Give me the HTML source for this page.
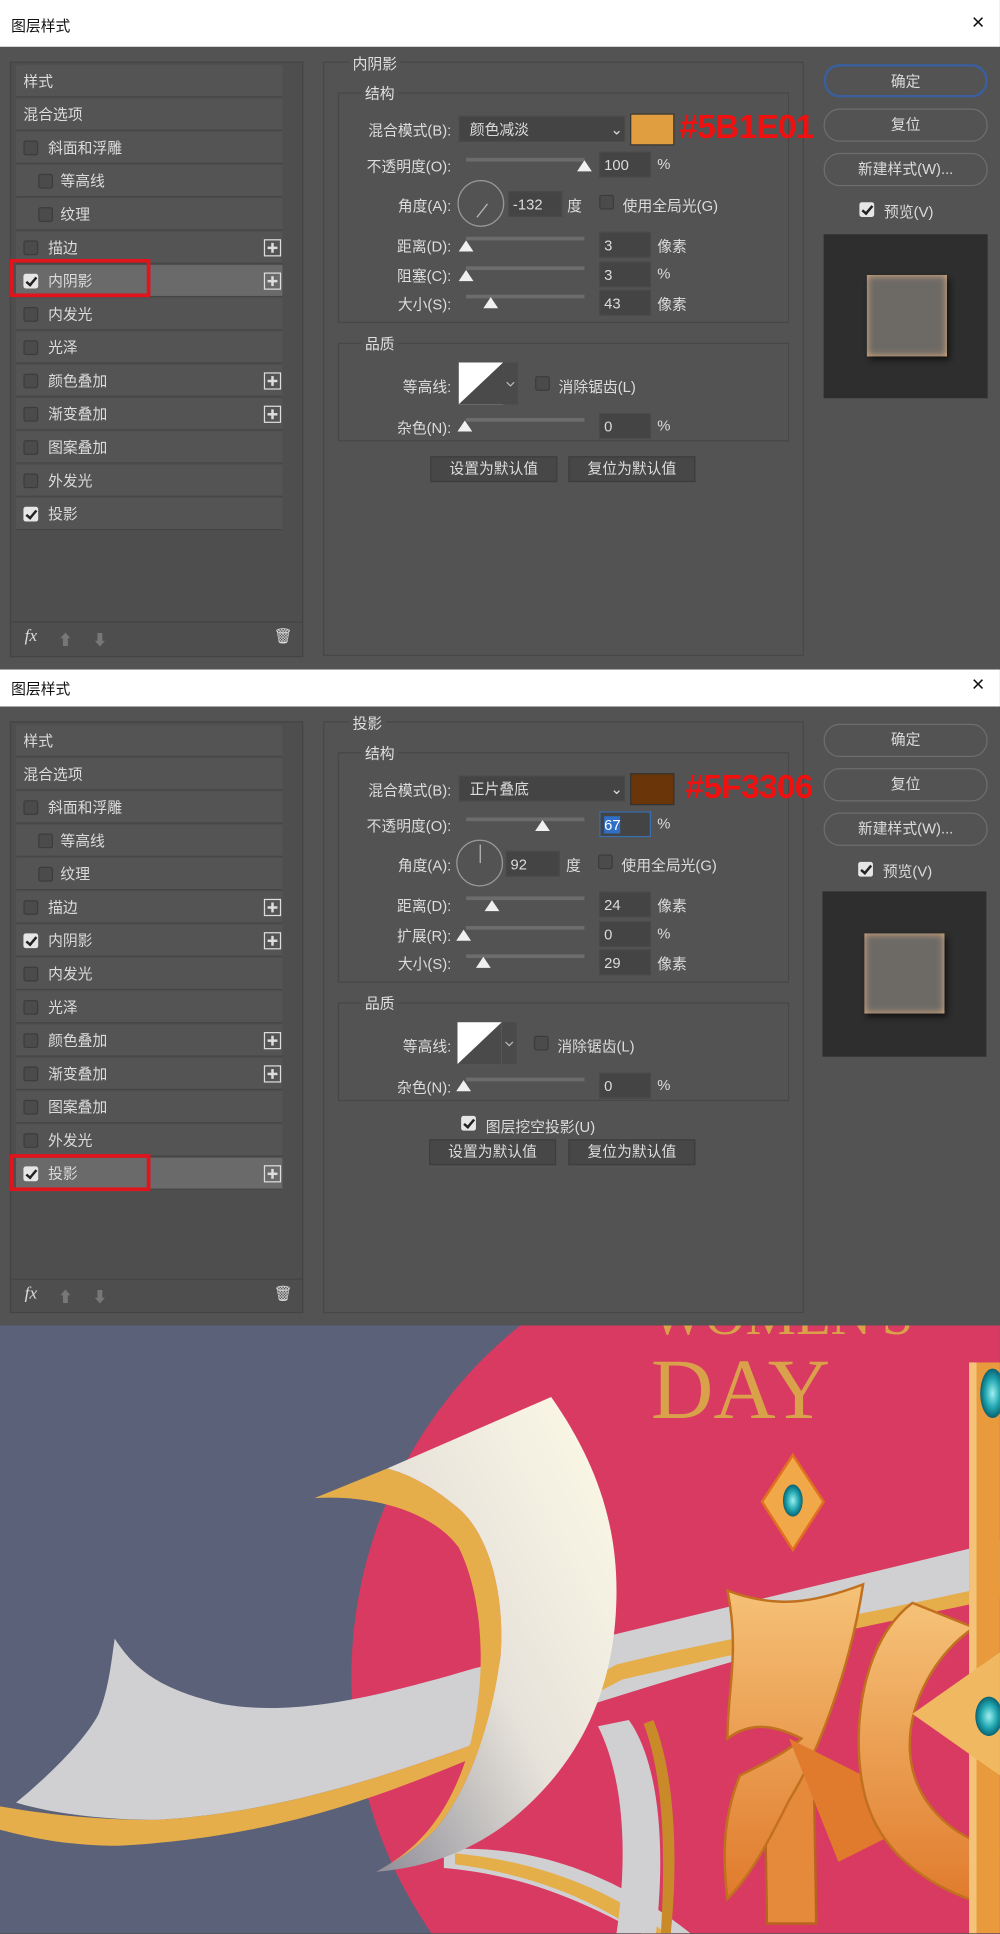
<!DOCTYPE html>
<html><head><meta charset="utf-8"><style>
*{box-sizing:border-box;margin:0;padding:0}
html,body{width:1000px;height:1934px;overflow:hidden;background:#535353}
#w{position:absolute;left:0;top:0;width:811px;height:1568px;overflow:hidden;transform:scale(1.2330);transform-origin:0 0;font-family:"Liberation Sans","Noto Sans CJK SC",sans-serif;font-size:12px;color:#dcdcdc}
.a{position:absolute}
.dlg{position:absolute;left:0;width:811px}
.tb{position:absolute;left:0;width:811px;background:#fff;color:#111;font-size:12px}
.body{position:absolute;left:0;top:38px;width:811px;background:#535353}
.lp{position:absolute;left:8px;top:50px;width:238px;height:483px;background:#4e4e4e;border:1px solid #444}
.row{position:absolute;left:4px;width:216px;height:26px;background:#545454;border-bottom:1px solid #454545;line-height:26px}
.row.sel{background:#6a6a6a}
.cb{position:absolute;width:12px;height:12px;border:1px solid #3c3c3c;background:#4b4b4b;border-radius:2px}
.cb.on{background:#e6e6e6;border-color:#e6e6e6}
.cb.on:after{content:"";position:absolute;left:3px;top:0px;width:3px;height:7px;border:solid #222;border-width:0 2px 2px 0;transform:rotate(40deg)}
.plus{position:absolute;left:201px;top:6px;width:14px;height:14px;border:1px solid #ddd}
.plus:before{content:"";position:absolute;left:2px;top:5px;width:8px;height:2px;background:#ddd}
.plus:after{content:"";position:absolute;left:5px;top:2px;width:2px;height:8px;background:#ddd}
.grp{position:absolute;border:1px solid #474747}
.lbl{position:absolute;background:#535353;padding:0 3px;color:#e0e0e0}
.rl{position:absolute;text-align:right;width:120px}
.inp{position:absolute;background:#444;border:1px solid #4a4a4a;height:21px;line-height:20px;padding-left:3px}
.tr{position:absolute;height:3px;background:#6c6c6c;width:96px}
.th{position:absolute;width:0;height:0;border-left:6px solid transparent;border-right:6px solid transparent;border-bottom:9px solid #f0f0f0}
.btn{position:absolute;border:1px solid #6e6e6e;border-radius:13px;text-align:center;line-height:25px;height:27px;width:133px;left:668px}
.sb{position:absolute;background:#474747;border:1px solid #3d3d3d;text-align:center;line-height:19px;height:21px;width:103px}
.red{position:absolute;color:#f01010;font-weight:bold;font-size:27px;font-family:"Liberation Sans",sans-serif;letter-spacing:-0.5px}
</style></head><body><div id="w">

<!-- DIALOG 1 -->
<div class="dlg" style="top:0;height:543px">
 <div class="tb" style="top:0;height:38px"><span class="a" style="left:9px;top:12px">图层样式</span><span class="a" style="left:788px;top:8px;font-size:18px">×</span></div>
 <div class="body" style="height:505px">
  <div class="lp" style="top:12px">
   <div class="row" style="top:2px;padding-left:6px">样式</div>
   <div class="row" style="top:29px;padding-left:6px">混合选项</div>
   <div class="row" style="top:56px"><i class="cb" style="left:6px;top:7px"></i><span class="a" style="left:26px">斜面和浮雕</span></div>
   <div class="row" style="top:83px"><i class="cb" style="left:18px;top:7px"></i><span class="a" style="left:36px">等高线</span></div>
   <div class="row" style="top:110px"><i class="cb" style="left:18px;top:7px"></i><span class="a" style="left:36px">纹理</span></div>
   <div class="row" style="top:137px"><i class="cb" style="left:6px;top:7px"></i><span class="a" style="left:26px">描边</span><i class="plus"></i></div>
   <div class="row sel" style="top:164px"><i class="cb on" style="left:6px;top:7px"></i><span class="a" style="left:26px">内阴影</span><i class="plus"></i></div>
   <div class="row" style="top:191px"><i class="cb" style="left:6px;top:7px"></i><span class="a" style="left:26px">内发光</span></div>
   <div class="row" style="top:218px"><i class="cb" style="left:6px;top:7px"></i><span class="a" style="left:26px">光泽</span></div>
   <div class="row" style="top:245px"><i class="cb" style="left:6px;top:7px"></i><span class="a" style="left:26px">颜色叠加</span><i class="plus"></i></div>
   <div class="row" style="top:272px"><i class="cb" style="left:6px;top:7px"></i><span class="a" style="left:26px">渐变叠加</span><i class="plus"></i></div>
   <div class="row" style="top:299px"><i class="cb" style="left:6px;top:7px"></i><span class="a" style="left:26px">图案叠加</span></div>
   <div class="row" style="top:326px"><i class="cb" style="left:6px;top:7px"></i><span class="a" style="left:26px">外发光</span></div>
   <div class="row" style="top:353px"><i class="cb on" style="left:6px;top:7px"></i><span class="a" style="left:26px">投影</span></div>
   <div class="a" style="left:0;top:453px;width:236px;height:1px;background:#444"></div>
   <span class="a" style="left:11px;top:458px;font-style:italic;font-size:14px;font-family:'Liberation Serif',serif">fx</span>
   <span class="a" style="left:38px;top:459px;color:#777">⬆</span><span class="a" style="left:66px;top:459px;color:#777">⬇</span>
   <span class="a" style="left:213px;top:458px">🗑</span>
  </div>
  <div class="a" style="left:8px;top:172px;width:114px;height:31px;border:3px solid #e0141c"></div>
  <div class="grp" style="left:262px;top:12px;width:390px;height:482px"></div>
  <span class="lbl" style="left:283px;top:5px">内阴影</span>
  <div class="grp" style="left:274px;top:37px;width:366px;height:187px"></div>
  <span class="lbl" style="left:293px;top:29px">结构</span>
  <span class="rl" style="left:246px;top:59px">混合模式(B):</span>
  <div class="inp" style="left:372px;top:56px;width:135px;padding-left:8px">颜色减淡<span class="a" style="left:122px;top:0">⌄</span></div>
  <div class="a" style="left:511px;top:54px;width:36px;height:26px;background:#e09e40;border:1px solid #333"></div>
  <span class="red" style="left:551px;top:50px">#5B1E01</span>
  <span class="rl" style="left:246px;top:88px">不透明度(O):</span>
  <div class="tr" style="left:378px;top:90px"></div><i class="th" style="left:468px;top:92px"></i>
  <div class="inp" style="left:486px;top:85px;width:42px">100</div><span class="a" style="left:533px;top:88px">%</span>
  <span class="rl" style="left:246px;top:120px">角度(A):</span>
  <div class="a" style="left:371px;top:108px;width:38px;height:38px;border:1px solid #999;border-radius:50%"></div>
  <div class="a" style="left:381px;top:127px;width:14px;height:1px;background:#bbb;transform:rotate(-52deg);transform-origin:100% 0"></div>
  <div class="inp" style="left:412px;top:117px;width:44px">-132</div><span class="a" style="left:460px;top:120px">度</span>
  <i class="cb" style="left:486px;top:120px"></i><span class="a" style="left:505px;top:120px">使用全局光(G)</span>
  <span class="rl" style="left:246px;top:153px">距离(D):</span>
  <div class="tr" style="left:378px;top:154px"></div><i class="th" style="left:372px;top:157px"></i>
  <div class="inp" style="left:486px;top:150px;width:42px">3</div><span class="a" style="left:533px;top:153px">像素</span>
  <span class="rl" style="left:246px;top:177px">阻塞(C):</span>
  <div class="tr" style="left:378px;top:178px"></div><i class="th" style="left:372px;top:181px"></i>
  <div class="inp" style="left:486px;top:174px;width:42px">3</div><span class="a" style="left:533px;top:177px">%</span>
  <span class="rl" style="left:246px;top:200px">大小(S):</span>
  <div class="tr" style="left:378px;top:201px"></div><i class="th" style="left:392px;top:203px"></i>
  <div class="inp" style="left:486px;top:197px;width:42px">43</div><span class="a" style="left:533px;top:200px">像素</span>
  <div class="grp" style="left:274px;top:240px;width:366px;height:80px"></div>
  <span class="lbl" style="left:293px;top:232px">品质</span>
  <span class="rl" style="left:246px;top:267px">等高线:</span>
  <svg class="a" style="left:372px;top:256px" width="50" height="34"><rect x="0" y="0" width="36" height="34" fill="#fff"/><path d="M0 34L36 0V34Z" fill="#4a4a4a"/><rect x="36" y="0" width="12" height="34" fill="#4a4a4a"/><path d="M39 16l3 3 3-3" stroke="#bbb" fill="none"/></svg>
  <i class="cb" style="left:434px;top:267px"></i><span class="a" style="left:453px;top:267px">消除锯齿(L)</span>
  <span class="rl" style="left:246px;top:300px">杂色(N):</span>
  <div class="tr" style="left:378px;top:301px"></div><i class="th" style="left:371px;top:303px"></i>
  <div class="inp" style="left:486px;top:297px;width:42px">0</div><span class="a" style="left:533px;top:300px">%</span>
  <div class="sb" style="left:349px;top:332px">设置为默认值</div>
  <div class="sb" style="left:461px;top:332px">复位为默认值</div>
  <div class="btn" style="top:14px;border:2px solid #3a5f9c">确定</div>
  <div class="btn" style="top:50px">复位</div>
  <div class="btn" style="top:86px">新建样式(W)...</div>
  <i class="cb on" style="left:697px;top:126px"></i><span class="a" style="left:717px;top:125px">预览(V)</span>
  <div class="a" style="left:668px;top:152px;width:133px;height:133px;background:#2e2e2e"></div>
  <div class="a" style="left:703px;top:185px;width:65px;height:66px;background:#6d6a66;box-shadow:inset 0 0 6px #e8b480,2px 3px 5px #111"></div>
 </div>
</div>

<!-- DIALOG 2 -->
<div class="dlg" style="top:535px;height:540px">
 <div class="tb" style="top:8px;height:30px"><span class="a" style="left:9px;top:7px">图层样式</span><span class="a" style="left:788px;top:2px;font-size:18px">×</span></div>
 <div class="body" style="height:502px">
  <div class="lp" style="top:12px;height:480px">
   <div class="row" style="top:2px;padding-left:6px">样式</div>
   <div class="row" style="top:29px;padding-left:6px">混合选项</div>
   <div class="row" style="top:56px"><i class="cb" style="left:6px;top:7px"></i><span class="a" style="left:26px">斜面和浮雕</span></div>
   <div class="row" style="top:83px"><i class="cb" style="left:18px;top:7px"></i><span class="a" style="left:36px">等高线</span></div>
   <div class="row" style="top:110px"><i class="cb" style="left:18px;top:7px"></i><span class="a" style="left:36px">纹理</span></div>
   <div class="row" style="top:137px"><i class="cb" style="left:6px;top:7px"></i><span class="a" style="left:26px">描边</span><i class="plus"></i></div>
   <div class="row" style="top:164px"><i class="cb on" style="left:6px;top:7px"></i><span class="a" style="left:26px">内阴影</span><i class="plus"></i></div>
   <div class="row" style="top:191px"><i class="cb" style="left:6px;top:7px"></i><span class="a" style="left:26px">内发光</span></div>
   <div class="row" style="top:218px"><i class="cb" style="left:6px;top:7px"></i><span class="a" style="left:26px">光泽</span></div>
   <div class="row" style="top:245px"><i class="cb" style="left:6px;top:7px"></i><span class="a" style="left:26px">颜色叠加</span><i class="plus"></i></div>
   <div class="row" style="top:272px"><i class="cb" style="left:6px;top:7px"></i><span class="a" style="left:26px">渐变叠加</span><i class="plus"></i></div>
   <div class="row" style="top:299px"><i class="cb" style="left:6px;top:7px"></i><span class="a" style="left:26px">图案叠加</span></div>
   <div class="row" style="top:326px"><i class="cb" style="left:6px;top:7px"></i><span class="a" style="left:26px">外发光</span></div>
   <div class="row sel" style="top:353px"><i class="cb on" style="left:6px;top:7px"></i><span class="a" style="left:26px">投影</span><i class="plus"></i></div>
   <div class="a" style="left:0;top:451px;width:236px;height:1px;background:#444"></div>
   <span class="a" style="left:11px;top:456px;font-style:italic;font-size:14px;font-family:'Liberation Serif',serif">fx</span>
   <span class="a" style="left:38px;top:457px;color:#777">⬆</span><span class="a" style="left:66px;top:457px;color:#777">⬇</span>
   <span class="a" style="left:213px;top:456px">🗑</span>
  </div>
  <div class="a" style="left:8px;top:363px;width:114px;height:30px;border:3px solid #e0141c"></div>
  <div class="grp" style="left:262px;top:12px;width:390px;height:480px"></div>
  <span class="lbl" style="left:283px;top:5px">投影</span>
  <div class="grp" style="left:274px;top:37px;width:366px;height:187px"></div>
  <span class="lbl" style="left:293px;top:29px">结构</span>
  <span class="rl" style="left:246px;top:59px">混合模式(B):</span>
  <div class="inp" style="left:372px;top:56px;width:135px;padding-left:8px">正片叠底<span class="a" style="left:122px;top:0">⌄</span></div>
  <div class="a" style="left:511px;top:54px;width:36px;height:26px;background:#6a3508;border:1px solid #333"></div>
  <span class="red" style="left:556px;top:50px">#5F3306</span>
  <span class="rl" style="left:246px;top:88px">不透明度(O):</span>
  <div class="tr" style="left:378px;top:90px"></div><i class="th" style="left:434px;top:92px"></i>
  <div class="inp" style="left:486px;top:85px;width:42px;border-color:#3a6fb0"><span style="background:#2f6fc8;color:#fff">67</span></div><span class="a" style="left:533px;top:88px">%</span>
  <span class="rl" style="left:246px;top:120px">角度(A):</span>
  <div class="a" style="left:370px;top:108px;width:38px;height:38px;border:1px solid #999;border-radius:50%"></div>
  <div class="a" style="left:389px;top:112px;width:1px;height:15px;background:#bbb"></div>
  <div class="inp" style="left:410px;top:117px;width:44px">92</div><span class="a" style="left:459px;top:120px">度</span>
  <i class="cb" style="left:485px;top:120px"></i><span class="a" style="left:504px;top:120px">使用全局光(G)</span>
  <span class="rl" style="left:246px;top:153px">距离(D):</span>
  <div class="tr" style="left:378px;top:154px"></div><i class="th" style="left:393px;top:157px"></i>
  <div class="inp" style="left:486px;top:150px;width:42px">24</div><span class="a" style="left:533px;top:153px">像素</span>
  <span class="rl" style="left:246px;top:177px">扩展(R):</span>
  <div class="tr" style="left:378px;top:178px"></div><i class="th" style="left:370px;top:181px"></i>
  <div class="inp" style="left:486px;top:174px;width:42px">0</div><span class="a" style="left:533px;top:177px">%</span>
  <span class="rl" style="left:246px;top:200px">大小(S):</span>
  <div class="tr" style="left:378px;top:201px"></div><i class="th" style="left:386px;top:203px"></i>
  <div class="inp" style="left:486px;top:197px;width:42px">29</div><span class="a" style="left:533px;top:200px">像素</span>
  <div class="grp" style="left:274px;top:240px;width:366px;height:80px"></div>
  <span class="lbl" style="left:293px;top:232px">品质</span>
  <span class="rl" style="left:246px;top:267px">等高线:</span>
  <svg class="a" style="left:371px;top:256px" width="50" height="34"><rect x="0" y="0" width="36" height="34" fill="#fff"/><path d="M0 34L36 0V34Z" fill="#4a4a4a"/><rect x="36" y="0" width="12" height="34" fill="#4a4a4a"/><path d="M39 16l3 3 3-3" stroke="#bbb" fill="none"/></svg>
  <i class="cb" style="left:433px;top:267px"></i><span class="a" style="left:452px;top:267px">消除锯齿(L)</span>
  <span class="rl" style="left:246px;top:300px">杂色(N):</span>
  <div class="tr" style="left:378px;top:301px"></div><i class="th" style="left:370px;top:303px"></i>
  <div class="inp" style="left:486px;top:297px;width:42px">0</div><span class="a" style="left:533px;top:300px">%</span>
  <i class="cb on" style="left:374px;top:332px"></i><span class="a" style="left:394px;top:332px">图层挖空投影(U)</span>
  <div class="sb" style="left:348px;top:351px">设置为默认值</div>
  <div class="sb" style="left:461px;top:351px">复位为默认值</div>
  <div class="btn" style="top:14px">确定</div>
  <div class="btn" style="top:50px">复位</div>
  <div class="btn" style="top:86px">新建样式(W)...</div>
  <i class="cb on" style="left:696px;top:126px"></i><span class="a" style="left:716px;top:125px">预览(V)</span>
  <div class="a" style="left:667px;top:150px;width:133px;height:134px;background:#2e2e2e"></div>
  <div class="a" style="left:701px;top:184px;width:65px;height:65px;background:#6d6a66;box-shadow:inset 0 0 6px #e8b480,2px 3px 5px #111"></div>
 </div>
</div>

<!-- ARTWORK -->
<svg class="a" style="left:0;top:1075px" width="811" height="493" viewBox="0 1075 811 493">
 <defs>
  <linearGradient id="hg" x1="0" y1="1" x2="1" y2="0"><stop offset="0" stop-color="#8f8e98"/><stop offset="0.45" stop-color="#e6e2da"/><stop offset="1" stop-color="#fffbe8"/></linearGradient>
  <linearGradient id="og" x1="0" y1="0" x2="0" y2="1"><stop offset="0" stop-color="#f5c278"/><stop offset="1" stop-color="#e07a2c"/></linearGradient>
  <radialGradient id="tg"><stop offset="0" stop-color="#9ff0f0"/><stop offset="0.6" stop-color="#1fa5b0"/><stop offset="1" stop-color="#0b6170"/></radialGradient>
 </defs>
 <rect x="0" y="1075" width="811" height="493" fill="#5a6178"/>
 <circle cx="650" cy="1360" r="365" fill="#d93a62"/>
 <text x="528" y="1082" font-family="Liberation Serif,serif" font-size="46" fill="#d9a24a">WOMEN'S</text>
 <text x="528" y="1150" font-family="Liberation Serif,serif" font-size="70" fill="#d9a24a">DAY</text>
 <!-- lower grey band -->
 <path d="M360 1500 C430 1495 500 1520 560 1568 L520 1568 C470 1540 420 1520 360 1515 Z" fill="#d0d0d2"/>
 <path d="M369 1503 C440 1510 500 1535 540 1568 L520 1568 C480 1540 430 1520 369 1512Z" fill="#e4ae48"/>
 <path d="M510 1395 C535 1430 540 1500 532 1568 L500 1568 C510 1500 505 1440 485 1400 Z" fill="#d0d0d2"/>
 <path d="M530 1395 C548 1440 550 1510 544 1568 L536 1568 C540 1500 538 1440 522 1398Z" fill="#c98a2a"/>
 <!-- main grey band -->
 <path d="M93 1329 C110 1355 130 1370 180 1382 C237 1392 300 1378 385 1353 L811 1250 L811 1290 L700 1318 C600 1345 480 1380 378 1417 C300 1445 220 1470 128 1476 C80 1476 40 1470 13 1462 C40 1440 70 1410 80 1390 C88 1370 90 1350 93 1329 Z" fill="#d0d0d3"/>
 <path d="M0 1465 C40 1472 80 1476 128 1476 C220 1470 300 1445 378 1417 L500 1350 C580 1330 650 1320 811 1285 L811 1296 C650 1330 580 1345 505 1362 L378 1428 C300 1460 220 1490 96 1497 C60 1497 30 1492 0 1484 Z" fill="#e5ae4a"/>
 <!-- horn -->
 <path d="M255 1215 L314 1191 C330 1195 350 1205 369 1221 C395 1240 410 1290 406 1343 C400 1390 385 1440 360 1475 C350 1490 330 1505 305 1518 C340 1500 365 1470 380 1420 C396 1360 392 1295 372 1255 C350 1225 300 1212 255 1215Z" fill="#e5ae4a"/>
 <path d="M314 1191 L447 1133 C480 1180 500 1230 500 1290 C500 1370 470 1430 417 1474 C390 1497 350 1515 305 1518 C330 1505 350 1490 360 1475 C385 1440 400 1390 406 1343 C410 1290 395 1240 369 1221 C350 1205 330 1195 314 1191 Z" fill="url(#hg)"/>
 <!-- gold letter -->
 <path d="M620 1430 L660 1430 L662 1560 L622 1560 Z" fill="#e58a3a" stroke="#b8641e" stroke-width="2"/>
 <path d="M590 1290 C630 1305 660 1300 700 1285 C690 1350 665 1420 640 1460 C625 1490 610 1520 590 1540 C585 1500 588 1470 600 1440 C620 1430 640 1420 650 1410 C630 1400 610 1395 590 1410 C590 1370 600 1340 590 1290 Z" fill="url(#og)" stroke="#c0701e" stroke-width="2"/>
 <path d="M640 1410 L700 1440 L720 1490 L680 1510 Z" fill="#e07a2c"/>
 <path d="M740 1300 C700 1330 690 1400 700 1450 C710 1500 750 1530 800 1545 L811 1500 C770 1490 740 1460 738 1420 C736 1380 760 1340 790 1320 Z" fill="url(#og)" stroke="#c0701e" stroke-width="2"/>
 <rect x="786" y="1105" width="25" height="463" fill="#e89a3c"/>
 <rect x="786" y="1105" width="6" height="463" fill="#f5c27a"/>
 <ellipse cx="805" cy="1130" rx="10" ry="20" fill="url(#tg)"/>
 <path d="M740 1390 L811 1340 L811 1440 Z" fill="#f0b860"/>
 <ellipse cx="802" cy="1392" rx="11" ry="16" fill="url(#tg)"/>
 <!-- diamond gem -->
 <path d="M643 1180 L668 1218 L643 1257 L618 1218 Z" fill="#f0a848" stroke="#e07020" stroke-width="2"/>
 <ellipse cx="643" cy="1217" rx="8" ry="13" fill="url(#tg)"/>
</svg>
</div></body></html>
